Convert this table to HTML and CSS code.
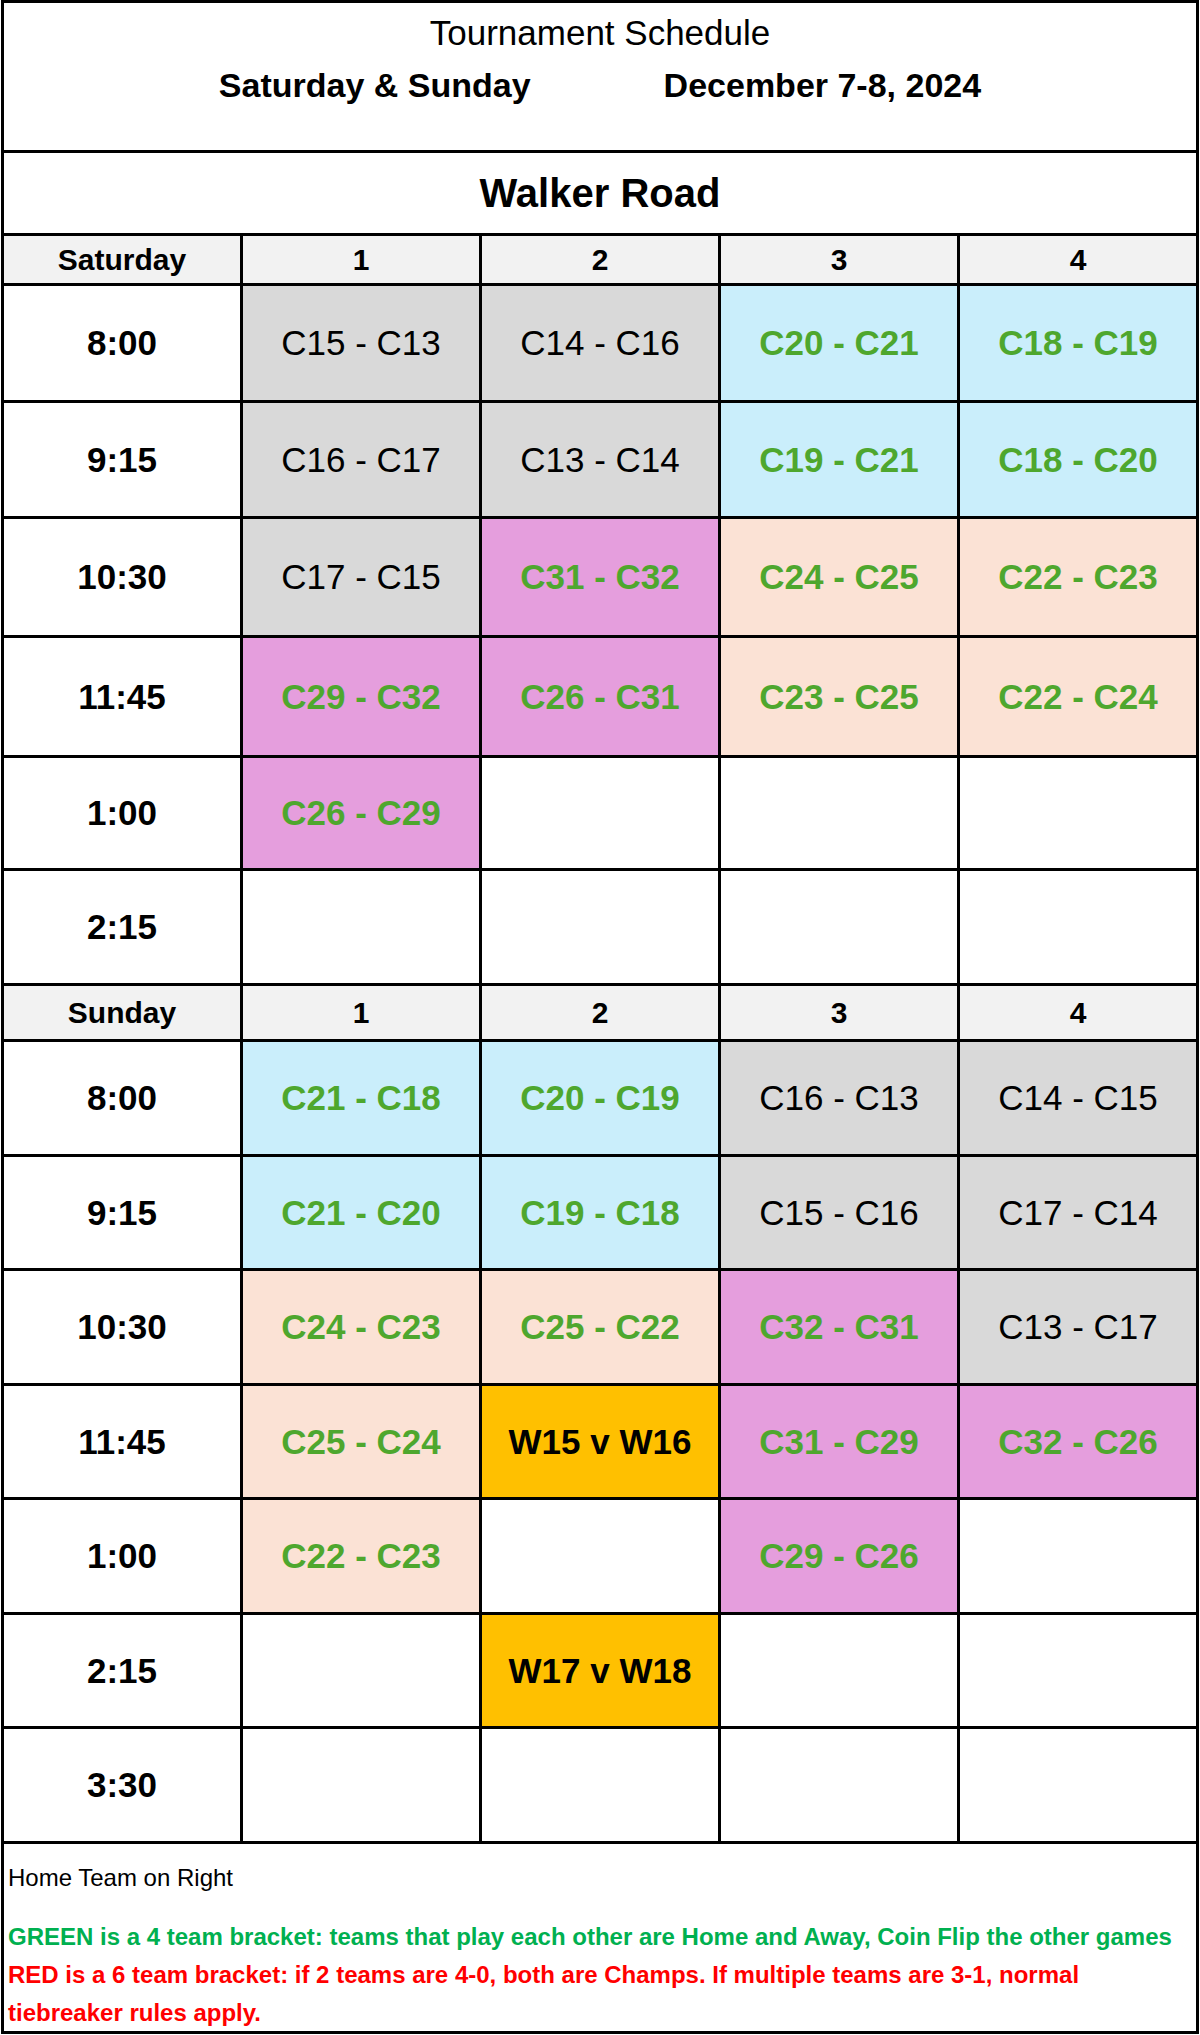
FILE: index.html
```html
<!DOCTYPE html>
<html lang="en">
<head>
<meta charset="utf-8">
<title>Tournament Schedule</title>
<link rel="stylesheet" href="styles.css">
</head>
<body>
<div class="sheet">
  <div class="title-block">
    <div class="title">Tournament Schedule</div>
    <div class="dates"><span>Saturday &amp; Sunday</span><span>December 7-8, 2024</span></div>
  </div>
  <div class="venue">Walker Road</div>

  <div class="hdr">Saturday</div><div class="hdr">1</div><div class="hdr">2</div><div class="hdr">3</div><div class="hdr">4</div>

  <div class="time">8:00</div><div class="g gray">C15 - C13</div><div class="g gray">C14 - C16</div><div class="g blue">C20 - C21</div><div class="g blue">C18 - C19</div>
  <div class="time">9:15</div><div class="g gray">C16 - C17</div><div class="g gray">C13 - C14</div><div class="g blue">C19 - C21</div><div class="g blue">C18 - C20</div>
  <div class="time">10:30</div><div class="g gray">C17 - C15</div><div class="g pink">C31 - C32</div><div class="g peach">C24 - C25</div><div class="g peach">C22 - C23</div>
  <div class="time">11:45</div><div class="g pink">C29 - C32</div><div class="g pink">C26 - C31</div><div class="g peach">C23 - C25</div><div class="g peach">C22 - C24</div>
  <div class="time">1:00</div><div class="g pink">C26 - C29</div><div class="g"></div><div class="g"></div><div class="g"></div>
  <div class="time">2:15</div><div class="g"></div><div class="g"></div><div class="g"></div><div class="g"></div>

  <div class="hdr">Sunday</div><div class="hdr">1</div><div class="hdr">2</div><div class="hdr">3</div><div class="hdr">4</div>

  <div class="time">8:00</div><div class="g blue">C21 - C18</div><div class="g blue">C20 - C19</div><div class="g gray">C16 - C13</div><div class="g gray">C14 - C15</div>
  <div class="time">9:15</div><div class="g blue">C21 - C20</div><div class="g blue">C19 - C18</div><div class="g gray">C15 - C16</div><div class="g gray">C17 - C14</div>
  <div class="time">10:30</div><div class="g peach">C24 - C23</div><div class="g peach">C25 - C22</div><div class="g pink">C32 - C31</div><div class="g gray">C13 - C17</div>
  <div class="time">11:45</div><div class="g peach">C25 - C24</div><div class="g final">W15 v W16</div><div class="g pink">C31 - C29</div><div class="g pink">C32 - C26</div>
  <div class="time">1:00</div><div class="g peach">C22 - C23</div><div class="g"></div><div class="g pink">C29 - C26</div><div class="g"></div>
  <div class="time">2:15</div><div class="g"></div><div class="g final">W17 v W18</div><div class="g"></div><div class="g"></div>
  <div class="time">3:30</div><div class="g"></div><div class="g"></div><div class="g"></div><div class="g"></div>

  <div class="notes">
    <p class="home">Home Team on Right</p>
    <p class="green-note">GREEN is a 4 team bracket: teams that play each other are Home and Away, Coin Flip the other games</p>
    <p class="red-note">RED is a 6 team bracket: if 2 teams are 4-0, both are Champs. If multiple teams are 3-1, normal tiebreaker rules apply.</p>
  </div>
</div>
</body>
</html>
```

FILE: styles.css
```css
* { box-sizing: border-box; }

html, body {
  margin: 0;
  padding: 0;
  background: #ffffff;
}

body {
  font-family: "Liberation Sans", Arial, sans-serif;
  color: #000000;
}

.sheet {
  margin-left: 1px;
  width: 1198px;
  padding: 3px;
  background: #000000;
  display: grid;
  grid-template-columns: repeat(5, 236px);
  grid-template-rows: 147px 80px 47px 114px 113px 116px 117px 110px 112px 53px 112px 111px 112px 111px 112px 111px 112px 187px;
  gap: 3px;
}

.sheet > div {
  background: #ffffff;
}

.title-block {
  grid-column: 1 / -1;
  padding-top: 8px;
}

.title {
  text-align: center;
  font-size: 35px;
  line-height: 44px;
}

.dates {
  display: flex;
  justify-content: center;
  gap: 133px;
  font-size: 34px;
  font-weight: bold;
  line-height: 40px;
  margin-top: 10px;
}

.venue {
  grid-column: 1 / -1;
  display: flex;
  align-items: center;
  justify-content: center;
  font-size: 40px;
  font-weight: bold;
}

.sheet > .hdr {
  background: #f2f2f2;
  display: flex;
  align-items: center;
  justify-content: center;
  font-size: 30px;
  font-weight: bold;
}

.time {
  display: flex;
  align-items: center;
  justify-content: center;
  font-size: 35px;
  font-weight: bold;
}

.g {
  display: flex;
  align-items: center;
  justify-content: center;
  font-size: 35px;
}

.sheet > .gray { background: #d9d9d9; }
.sheet > .blue { background: #caeefb; color: #4ea72e; font-weight: bold; }
.sheet > .peach { background: #fbe2d5; color: #4ea72e; font-weight: bold; }
.sheet > .pink { background: #e59edd; color: #4ea72e; font-weight: bold; }
.sheet > .final { background: #ffc000; font-weight: bold; }

.notes {
  grid-column: 1 / -1;
  padding: 15px 4px 0 4px;
}

.notes p {
  margin: 0;
  max-width: 1170px;
  font-size: 24px;
  line-height: 38px;
}

.home {
  margin-bottom: 21px !important;
}

.green-note {
  color: #00b050;
  font-weight: bold;
}

.red-note {
  color: #ff0000;
  font-weight: bold;
  line-height: 38px;
}
```
